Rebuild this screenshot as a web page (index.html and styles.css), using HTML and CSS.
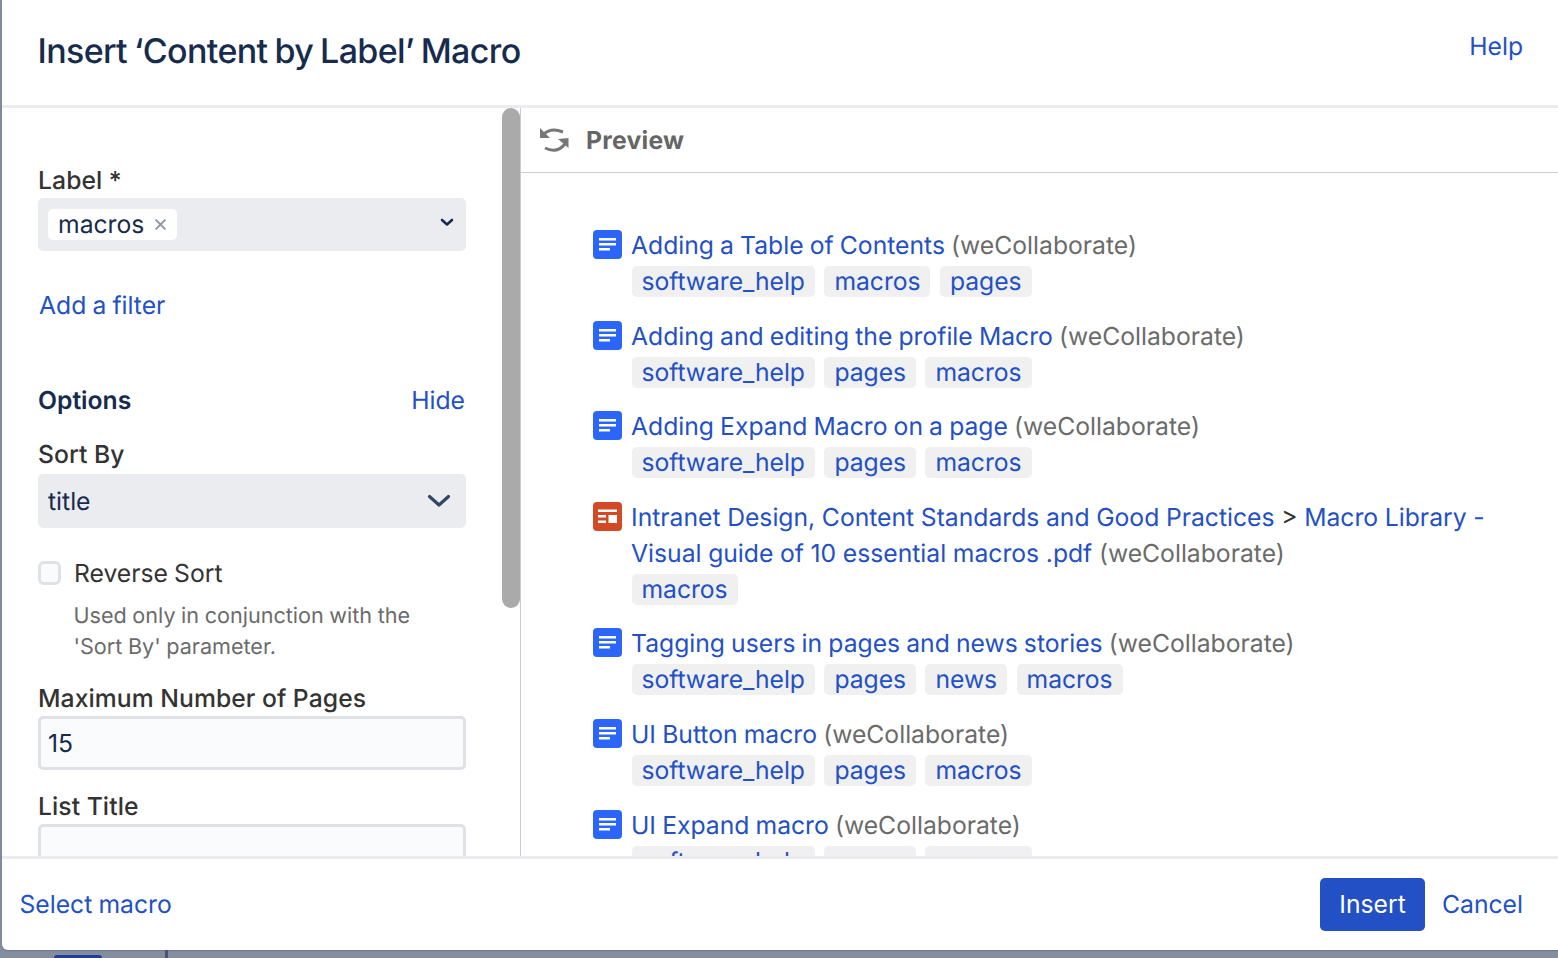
FILE: index.html
```html
<!DOCTYPE html>
<html lang="en">
<head>
<meta charset="utf-8">
<title>Insert Content by Label Macro</title>
<link rel="stylesheet" href="styles.css">
</head>
<body>
<div class="backdrop-tab"></div>
<div class="backdrop-line"></div>
<main class="dialog">
  <header class="dialog-header">
    <h1 class="dialog-title">Insert ‘Content by Label’ Macro</h1>
    <a class="link help-link">Help</a>
  </header>
  <div class="dialog-body">
    <aside class="options">
      <div class="scroll-thumb"></div>
      <div class="field-label first-label">Label *</div>
      <div class="select label-select">
        <span class="chip">macros<svg class="chip-x" viewBox="0 0 12 12"><path d="M1.500 1.500l9 9M10.500 1.500l-9 9" fill="none" stroke="#8993A4" stroke-width="1.700"/></svg></span>
        <svg class="chev-small" viewBox="0 0 14 9"><path d="M2 2l5 4.400L12 2" fill="none" stroke="#172B4D" stroke-width="2.600" stroke-linecap="round" stroke-linejoin="round"/></svg>
      </div>
      <a class="link add-filter">Add a filter</a>
      <div class="options-head"><span class="options-title">Options</span><a class="link hide-link">Hide</a></div>
      <div class="field-label sort-label">Sort By</div>
      <div class="select sort-select">
        <span>title</span>
        <svg class="chev-large" viewBox="0 0 24 14"><path d="M2.500 2.500L12 11l9.500-8.500" fill="none" stroke="#344563" stroke-width="3.200" stroke-linecap="round" stroke-linejoin="round"/></svg>
      </div>
      <div class="check-row"><span class="checkbox"></span><span class="check-label">Reverse Sort</span></div>
      <p class="help-text">Used only in conjunction with the<br>'Sort By' parameter.</p>
      <div class="field-label group-label">Maximum Number of Pages</div>
      <div class="input">15</div>
      <div class="field-label group-label">List Title</div>
      <div class="input"></div>
    </aside>
    <section class="preview">
      <div class="preview-head">
        <svg class="refresh" viewBox="0 0 30 30"><g fill="none" stroke="#777" stroke-width="3"><path d="M5 9Q12 2 24 7"/><path d="M6 23Q18 29 26 19"/></g><path d="M1 3v10h10zM29.500 13v10L19 14z" fill="#777"/></svg>
        <span class="preview-title">Preview</span>
      </div>
      <div class="results">
        <div class="item">
          <svg class="ico" viewBox="0 0 29 29"><use href="#page"/></svg>
          <div class="item-text"><a class="link">Adding a Table of Contents</a> <span class="space">(weCollaborate)</span>
            <div class="tags"><a class="tag">software_help</a><a class="tag">macros</a><a class="tag">pages</a></div></div>
        </div>
        <div class="item">
          <svg class="ico" viewBox="0 0 29 29"><use href="#page"/></svg>
          <div class="item-text"><a class="link">Adding and editing the profile Macro</a> <span class="space">(weCollaborate)</span>
            <div class="tags"><a class="tag">software_help</a><a class="tag">pages</a><a class="tag">macros</a></div></div>
        </div>
        <div class="item">
          <svg class="ico" viewBox="0 0 29 29"><use href="#page"/></svg>
          <div class="item-text"><a class="link">Adding Expand Macro on a page</a> <span class="space">(weCollaborate)</span>
            <div class="tags"><a class="tag">software_help</a><a class="tag">pages</a><a class="tag">macros</a></div></div>
        </div>
        <div class="item item-wide">
          <svg class="ico" viewBox="0 0 29 29"><rect width="29" height="29" rx="4" fill="#D24A25"/><path d="M5 7.500h19v2.500H5zM5 13h8v2.500H5zM5 18.500h8V21H5zM15.500 13H24v8h-8.500z" fill="#fff"/></svg>
          <div class="item-text"><a class="link">Intranet Design, Content Standards and Good Practices</a> <span class="crumb">&gt;</span> <a class="link">Macro Library -<br>Visual guide of 10 essential macros .pdf</a> <span class="space">(weCollaborate)</span>
            <div class="tags"><a class="tag">macros</a></div></div>
        </div>
        <div class="item">
          <svg class="ico" viewBox="0 0 29 29"><use href="#page"/></svg>
          <div class="item-text"><a class="link">Tagging users in pages and news stories</a> <span class="space">(weCollaborate)</span>
            <div class="tags"><a class="tag">software_help</a><a class="tag">pages</a><a class="tag">news</a><a class="tag">macros</a></div></div>
        </div>
        <div class="item">
          <svg class="ico" viewBox="0 0 29 29"><use href="#page"/></svg>
          <div class="item-text"><a class="link">UI Button macro</a> <span class="space">(weCollaborate)</span>
            <div class="tags"><a class="tag">software_help</a><a class="tag">pages</a><a class="tag">macros</a></div></div>
        </div>
        <div class="item">
          <svg class="ico" viewBox="0 0 29 29"><use href="#page"/></svg>
          <div class="item-text"><a class="link">UI Expand macro</a> <span class="space">(weCollaborate)</span>
            <div class="tags"><a class="tag">software_help</a><a class="tag">pages</a><a class="tag">macros</a></div></div>
        </div>
      </div>
    </section>
  </div>
  <footer class="dialog-footer">
    <a class="link">Select macro</a>
    <div class="footer-actions"><button class="insert">Insert</button><a class="link">Cancel</a></div>
  </footer>
</main>
<svg class="defs" width="0" height="0"><defs><g id="page"><rect width="29" height="29" rx="4" fill="#2B65FA"/><path d="M6 8h17v2.500H6zM6 13h17v2.500H6zM6 18h11v2.500H6z" fill="#fff"/></g></defs></svg>
</body>
</html>
```
FILE: styles.css
```css
* { box-sizing: border-box; }
html, body { margin: 0; height: 958px; overflow: hidden; }
body { background: #858EA1; font-family: Inter, "Noto Sans", sans-serif; font-size: 24.700px; word-spacing: -.8px; line-height: 36px; color: #333; position: relative; text-rendering: geometricPrecision; }
.defs { position: absolute; }
.backdrop-tab { position: absolute; left: 54px; top: 955px; width: 48px; height: 3px; background: #1F3F94; border-radius: 3px 3px 0 0; }
.backdrop-line { position: absolute; left: 165px; top: 950px; width: 3px; height: 8px; background: #4A5470; }
.dialog { margin-left: 2px; height: 950px; background: #fff; border-radius: 0 0 0 6px; display: flex; flex-direction: column; overflow: hidden; box-shadow: 0 1px 2px rgba(9,30,66,.2); }
.link, .tag { color: #2350C5; text-decoration: none; }
.dialog-header { height: 108px; flex: none; border-bottom: 3px solid #EBECF0; display: flex; justify-content: space-between; padding: 0 35px 0 35.500px; }
.dialog-title { margin: 31px 0 0; font-size: 34px; line-height: 42px; font-weight: 450; letter-spacing: -.63px; word-spacing: -1.500px; color: #172B4D; }
.help-link { margin-top: 28px; }
.dialog-body { flex: 1; min-height: 0; display: flex; }
.options { width: 519px; flex: none; padding: 57px 54px 0 36px; border-right: 1px solid #CCC; position: relative; overflow: hidden; }
.scroll-thumb { position: absolute; right: 0; top: 0; width: 18px; height: 500px; background: #AAA; border-radius: 9px; }
.field-label { line-height: 30px; font-weight: 500; color: #333; margin-bottom: 3px; letter-spacing: .08px; word-spacing: -.2px; }
.select { background: #EBECF0; border-radius: 5px; display: flex; align-items: center; justify-content: space-between; color: #172B4D; }
.label-select { height: 53px; padding: 0 12px 4px 10px; }
.chip { background: #fff; border-radius: 5px; height: 31px; line-height: 31px; padding: 0 10px; display: inline-flex; align-items: center; margin-top: 4px; }
.chip-x { width: 13px; height: 13px; margin-left: 10px; }
.chev-small { width: 14px; height: 9px; }
.add-filter { display: block; line-height: 30px; margin: 39px 0 0 1px; }
.options-head { display: flex; justify-content: space-between; line-height: 30px; margin-top: 65px; }
.options-title { font-weight: 600; color: #172B4D; }
.hide-link { margin-right: 1px; }
.sort-label { margin-top: 24px; margin-bottom: 5px; }
.sort-select { height: 54px; padding: 0 15px 0 10px; }
.chev-large { width: 24px; height: 14px; }
.check-row { display: flex; align-items: center; gap: 13px; height: 30px; margin-top: 30px; }
.checkbox { width: 23px; height: 24px; border: 3px solid #DFE1E6; border-radius: 6px; background: #FAFBFC; }
.help-text { margin: 13px 0 0 35.500px; font-size: 21.600px; word-spacing: -.5px; line-height: 31px; color: #6B6B6B; }
.group-label { margin-top: 21px; }
.help-text + .group-label { margin-top: 20px; }
.input { height: 54px; border: 3px solid #DFE1E6; border-radius: 5px; background: #FAFBFC; padding: 0 7px; line-height: 48px; color: #172B4D; }
.preview { flex: 1; min-width: 0; overflow: hidden; }
.preview-head { height: 65px; border-bottom: 1px solid #CCC; display: flex; align-items: center; gap: 17px; padding: 0 0 0 18px; }
.refresh { width: 30px; height: 30px; filter: blur(.5px); }
.preview-title { font-weight: 700; color: #666; letter-spacing: .25px; }
.results { padding: 54px 0 0 72px; }
.item { display: flex; gap: 9px; margin-bottom: 18.600px; }
.item-wide { word-spacing: -.3px; }
.ico { width: 29px; height: 29px; flex: none; margin-top: 3px; }
.item-text { flex: 1; min-width: 0; }
.space { color: #6B6B6B; }
.crumb { color: #333; }
.tags { display: flex; gap: 9.500px; margin-left: .5px; }
.tag { background: #F0F0F0; border-radius: 5px; height: 31px; line-height: 31px; padding: 0 10px; margin: 3px 0 2px; letter-spacing: -.05px; }
.dialog-footer { height: 94px; flex: none; border-top: 3px solid #EBECF0; display: flex; align-items: center; justify-content: space-between; padding: 0 35px 2px 17.500px; }
.footer-actions { display: flex; align-items: center; gap: 17px; }
.insert { width: 105px; height: 53px; margin-top: 2px; padding: 0 0 2px; border: 0; border-radius: 5px; background: #2350C5; color: #fff; font: inherit; }
```
